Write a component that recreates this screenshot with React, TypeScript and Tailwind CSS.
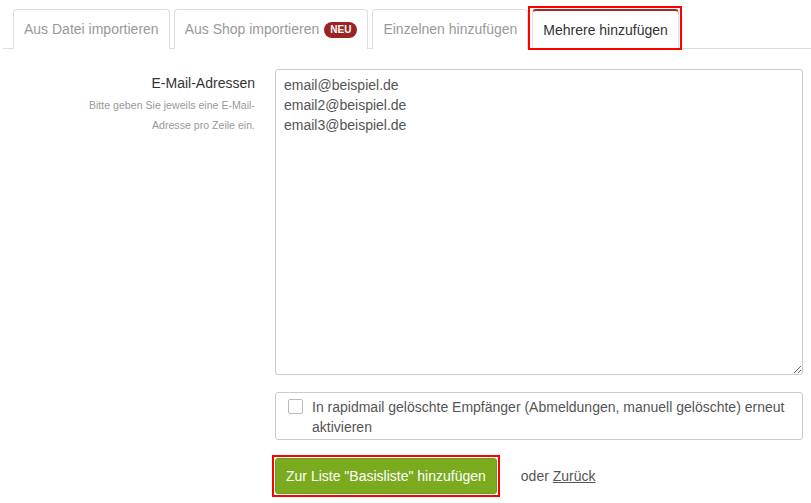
import React from 'react';

const tabs = [
  { label: 'Aus Datei importieren' },
  { label: 'Aus Shop importieren', badge: 'NEU' },
  { label: 'Einzelnen hinzufügen' },
];

export default function App() {
  return (
    <div className="w-[811px] h-[503px] overflow-hidden bg-white font-['Liberation_Sans',Arial,sans-serif] text-[14px] text-[#555]">
      {/* tab bar */}
      <div className="ml-[3px] pt-[9px] border-b border-[#ddd] flex items-end gap-[4px] pl-[10px]">
        {tabs.map((t) => (
          <div
            key={t.label}
            className="h-[40px] -mb-px flex items-center gap-[5px] px-[10px] rounded-t-[4px] border border-b-0 border-[#ddd] text-[#999] bg-white"
          >
            <span>{t.label}</span>
            {t.badge && (
              <span className="h-[16px] px-[6px] rounded-full bg-[#9b2321] text-white text-[10px] font-bold leading-[16px]">
                {t.badge}
              </span>
            )}
          </div>
        ))}
        <div className="relative h-[40px] -mb-px flex items-center px-[10px] rounded-t-[4px] border border-b-0 border-[#ddd] border-t-2 border-t-[#a52424] text-[#333] bg-white">
          Mehrere hinzufügen
          <span className="absolute -left-[5px] -right-[4px] -top-[5px] -bottom-[1px] border-2 border-[#ff0000] pointer-events-none" />
        </div>
      </div>

      {/* form */}
      <div className="mt-[20px] flex gap-[20px]">
        <div className="w-[255px] text-right pt-[4px]">
          <div className="text-[#333] text-[14px] leading-[20px]">E-Mail-Adressen</div>
          <div className="mt-[2px] text-[10.6px] leading-[20px] text-[#999] pl-[80px]">
            Bitte geben Sie jeweils eine E-Mail-Adresse pro Zeile ein.
          </div>
        </div>
        <div className="w-[528px]">
          <textarea
            defaultValue={'email@beispiel.de\nemail2@beispiel.de\nemail3@beispiel.de'}
            className="block w-full h-[306px] border border-[#ccc] rounded-[3px] px-[8px] pt-[5px] pb-[4px] text-[14px] leading-[20px] text-[#555] font-['Liberation_Sans',Arial,sans-serif] outline-none"
          />
          <label className="mt-[17px] flex items-start gap-[9px] border border-[#ccc] rounded-[3px] pl-[12px] pr-[10px] pt-[4px] pb-[2px] leading-[20px]">
            <span className="mt-[2px] w-[15px] h-[15px] shrink-0 border border-[#bbb] rounded-[2px] bg-white" />
            <span>In rapidmail gelöschte Empfänger (Abmeldungen, manuell gelöschte) erneut aktivieren</span>
          </label>
          <div className="mt-[15px] flex items-center gap-[21px] -ml-[3px]">
            <div className="border-2 border-[#ff0000] p-[1px]">
              <button className="block h-[36px] px-[10px] rounded-[3px] border border-[#6f9c17] bg-[#7aab1e] text-white text-[14px]">
                Zur Liste "Basisliste" hinzufügen
              </button>
            </div>
            <span>
              oder <a href="#" className="underline">Zurück</a>
            </span>
          </div>
        </div>
      </div>
    </div>
  );
}
